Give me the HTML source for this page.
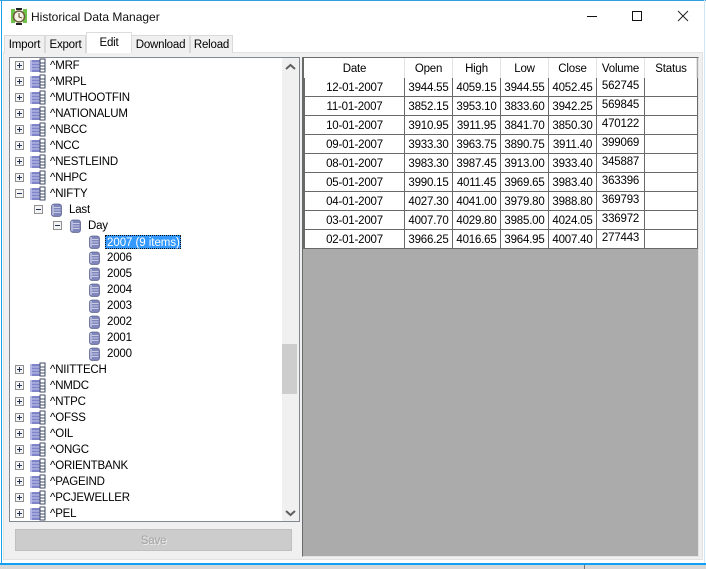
<!DOCTYPE html>
<html><head><meta charset="utf-8"><style>
html,body{margin:0;padding:0}
body{width:706px;height:569px;position:relative;overflow:hidden;background:#fff;font:11.5px "Liberation Sans",sans-serif;letter-spacing:-.2px;color:#000}
div,span,svg{position:absolute;box-sizing:border-box}
.tab{top:35px;height:18px;background:#f0f0f0;border:1px solid #d9d9d9;border-bottom:0;text-align:center;line-height:18px}
.r{left:0;height:16px;line-height:16px;white-space:nowrap;padding-top:1px}
.h,.c{height:19px;line-height:19px;text-align:center;white-space:nowrap;padding-top:2px}
.c[style*="left:597px"]{padding-top:1px}
.vl{top:58px;width:1px;height:191px;background:#696969}
.hl{left:304px;width:393px;height:1px;background:#696969}
.hv{top:58px;width:1px;height:20px;background:#e3e3e3}
</style></head><body>
<svg width="0" height="0" style="left:0;top:0"><defs>
<g id="p"><rect x=".5" y=".5" width="8" height="8" fill="#f4f4f4" stroke="#8f8f8f"/><path d="M2 4.5h5M4.500 2v5" stroke="#22335a"/></g>
<g id="m"><rect x=".5" y=".5" width="8" height="8" fill="#f4f4f4" stroke="#8f8f8f"/><path d="M2 4.500h5" stroke="#22335a"/></g>
<g id="t"><rect x="0" y="2" width="11" height="12" rx="2" fill="#7f84c8"/><path d="M1 5h9M1 8h9M1 11h9" stroke="#c6c9ec"/><rect x="0" y="2" width="2" height="12" fill="#b5b8e6"/><rect x="10" y="1" width="5" height="13" fill="#fff" stroke="#3c4a66"/><path d="M10 5h5M10 8h5M10 11h5" stroke="#3c4a66"/></g>
<g id="d"><rect x=".5" y="1" width="10" height="12.500" rx="2.500" fill="#7f86bb" stroke="#5f6590" stroke-width=".8"/><path d="M2.500 4.500h7M2.500 7h7M2.500 9.500h7" stroke="#c8cbe4"/><rect x="1" y="2" width="2" height="10" fill="#c3c6e6" opacity=".7"/></g>
</defs></svg>

<div style="left:0;top:0;width:706px;height:1px;background:#2f9fe0"></div>
<div style="left:1px;top:0;width:1px;height:565px;background:#19a0f0"></div>
<div style="left:704px;top:0;width:1px;height:565px;background:#cfe6f5"></div>
<div style="left:0;top:563px;width:706px;height:2px;background:#12a0f4"></div>
<div style="left:0;top:565px;width:706px;height:4px;background:#d8d8d8"></div>
<div style="left:584px;top:565px;width:1px;height:4px;background:#777"></div>

<svg style="left:10px;top:8px" width="18" height="17" viewBox="0 0 18 17"><rect x="1" y="1" width="4" height="14" fill="#6fc24a"/><rect x="13" y="1" width="4" height="14" fill="#6fc24a"/><circle cx="9" cy="8.500" r="5.500" fill="#f5f2e6" stroke="#6b5a3a" stroke-width="1.500"/><path d="M9 5v4l3 1" stroke="#5a4a30" fill="none"/><rect x="6" y="0" width="6" height="2" fill="#222"/><rect x="6" y="15" width="6" height="2" fill="#222"/></svg>
<div style="left:31px;top:9px;font-size:12px;letter-spacing:0;line-height:16px;color:#111;white-space:nowrap">Historical Data Manager</div>

<svg style="left:620px;top:5px" width="80" height="22" viewBox="0 0 80 22"><rect x="12.500" y="6.500" width="9" height="9" fill="none" stroke="#111"/><path d="M58 6l10 10M68 6l-10 10" stroke="#222" fill="none"/></svg>
<div style="left:587px;top:16px;width:10px;height:1px;background:#111"></div>

<div style="left:3px;top:52px;width:700px;height:508px;background:#f0f0f0;border:1px solid #e2e2e2"></div>
<div class="tab" style="left:4px;width:41px">Import</div>
<div class="tab" style="left:45px;width:41px">Export</div>
<div class="tab" style="left:131px;width:59px">Download</div>
<div class="tab" style="left:190px;width:43px">Reload</div>
<div class="tab" style="left:86px;top:32px;width:46px;height:21px;background:#fff;line-height:20px;border-color:#dcdcdc">Edit</div>

<div style="left:9px;top:57px;width:291px;height:465px;background:#fff;border:1px solid #828790;overflow:hidden">
<div style="left:272px;top:0;width:17px;height:463px;background:#f0f0f0"></div>
<div style="left:272px;top:286px;width:15px;height:50px;background:#cdcdcd"></div>
<svg style="left:275px;top:5px" width="11" height="8"><path d="M1 6l4.500-4L10 6" fill="none" stroke="#606060" stroke-width="2"/></svg>
<svg style="left:275px;top:451px" width="11" height="8"><path d="M1 2l4.500 4L10 2" fill="none" stroke="#606060" stroke-width="2"/></svg>
</div>

<svg style="left:0;top:0" width="300" height="525">
<use href="#p" x="15" y="61"/><use href="#t" x="30" y="58"/>
<use href="#p" x="15" y="77"/><use href="#t" x="30" y="74"/>
<use href="#p" x="15" y="93"/><use href="#t" x="30" y="90"/>
<use href="#p" x="15" y="109"/><use href="#t" x="30" y="106"/>
<use href="#p" x="15" y="125"/><use href="#t" x="30" y="122"/>
<use href="#p" x="15" y="141"/><use href="#t" x="30" y="138"/>
<use href="#p" x="15" y="157"/><use href="#t" x="30" y="154"/>
<use href="#p" x="15" y="173"/><use href="#t" x="30" y="170"/>
<use href="#m" x="15" y="189"/><use href="#t" x="30" y="186"/>
<use href="#m" x="34" y="205"/><use href="#d" x="51" y="203"/>
<use href="#m" x="53" y="221"/><use href="#d" x="70" y="219"/>
<use href="#d" x="89" y="235"/><use href="#d" x="89" y="251"/><use href="#d" x="89" y="267"/><use href="#d" x="89" y="283"/>
<use href="#d" x="89" y="299"/><use href="#d" x="89" y="315"/><use href="#d" x="89" y="331"/><use href="#d" x="89" y="347"/>
<use href="#p" x="15" y="365"/><use href="#t" x="30" y="362"/>
<use href="#p" x="15" y="381"/><use href="#t" x="30" y="378"/>
<use href="#p" x="15" y="397"/><use href="#t" x="30" y="394"/>
<use href="#p" x="15" y="413"/><use href="#t" x="30" y="410"/>
<use href="#p" x="15" y="429"/><use href="#t" x="30" y="426"/>
<use href="#p" x="15" y="445"/><use href="#t" x="30" y="442"/>
<use href="#p" x="15" y="461"/><use href="#t" x="30" y="458"/>
<use href="#p" x="15" y="477"/><use href="#t" x="30" y="474"/>
<use href="#p" x="15" y="493"/><use href="#t" x="30" y="490"/>
<use href="#p" x="15" y="509"/><use href="#t" x="30" y="506"/>
</svg>

<div class="r" style="left:50px;top:57px">^MRF</div>
<div class="r" style="left:50px;top:73px">^MRPL</div>
<div class="r" style="left:50px;top:89px">^MUTHOOTFIN</div>
<div class="r" style="left:50px;top:105px">^NATIONALUM</div>
<div class="r" style="left:50px;top:121px">^NBCC</div>
<div class="r" style="left:50px;top:137px">^NCC</div>
<div class="r" style="left:50px;top:153px">^NESTLEIND</div>
<div class="r" style="left:50px;top:169px">^NHPC</div>
<div class="r" style="left:50px;top:185px">^NIFTY</div>
<div class="r" style="left:69px;top:201px">Last</div>
<div class="r" style="left:88px;top:217px">Day</div>
<div class="r" style="left:105px;top:235px;width:76px;height:14px;line-height:13px;background:#3399ff;color:#fff;border:1px dotted #111;padding-left:1px;letter-spacing:-.05px">2007 (9 items)</div>
<div class="r" style="left:107px;top:249px">2006</div>
<div class="r" style="left:107px;top:265px">2005</div>
<div class="r" style="left:107px;top:281px">2004</div>
<div class="r" style="left:107px;top:297px">2003</div>
<div class="r" style="left:107px;top:313px">2002</div>
<div class="r" style="left:107px;top:329px">2001</div>
<div class="r" style="left:107px;top:345px">2000</div>
<div class="r" style="left:50px;top:361px">^NIITTECH</div>
<div class="r" style="left:50px;top:377px">^NMDC</div>
<div class="r" style="left:50px;top:393px">^NTPC</div>
<div class="r" style="left:50px;top:409px">^OFSS</div>
<div class="r" style="left:50px;top:425px">^OIL</div>
<div class="r" style="left:50px;top:441px">^ONGC</div>
<div class="r" style="left:50px;top:457px">^ORIENTBANK</div>
<div class="r" style="left:50px;top:473px">^PAGEIND</div>
<div class="r" style="left:50px;top:489px">^PCJEWELLER</div>
<div class="r" style="left:50px;top:505px">^PEL</div>

<div style="left:15px;top:529px;width:277px;height:22px;background:#cccccc;border:1px solid #bfbfbf;text-align:center;line-height:22px;color:#a3a3a3;text-shadow:1px 1px 0 #eee">Save</div>

<div style="left:302px;top:57px;width:397px;height:500px;background:#ababab;border-top:1px solid #6a6a6a;border-left:1px solid #6a6a6a;border-right:1px solid #e3e3e3;border-bottom:1px solid #e3e3e3"></div>
<div style="left:303px;top:58px;width:2px;height:191px;background:#696969"></div>
<div style="left:304px;top:58px;width:393px;height:191px;background:#fff"></div>
<div style="left:303px;top:78px;width:2px;height:171px;background:#696969"></div>
<div class="hv" style="left:404px"></div><div class="hv" style="left:452px"></div><div class="hv" style="left:500px"></div><div class="hv" style="left:548px"></div><div class="hv" style="left:596px"></div><div class="hv" style="left:644px"></div><div class="hv" style="left:696px"></div>
<div class="vl" style="left:404px;top:78px;height:171px"></div><div class="vl" style="left:452px;top:78px;height:171px"></div><div class="vl" style="left:500px;top:78px;height:171px"></div><div class="vl" style="left:548px;top:78px;height:171px"></div><div class="vl" style="left:596px;top:78px;height:171px"></div><div class="vl" style="left:644px;top:78px;height:171px"></div><div class="vl" style="left:697px;top:78px;height:171px"></div>
<div class="hl" style="top:96px"></div><div class="hl" style="top:115px"></div><div class="hl" style="top:134px"></div><div class="hl" style="top:153px"></div><div class="hl" style="top:172px"></div><div class="hl" style="top:191px"></div><div class="hl" style="top:210px"></div><div class="hl" style="top:229px"></div><div class="hl" style="top:248px"></div>

<div class="h" style="left:305px;top:58px;width:99px">Date</div>
<div class="h" style="left:405px;top:58px;width:47px">Open</div>
<div class="h" style="left:453px;top:58px;width:47px">High</div>
<div class="h" style="left:501px;top:58px;width:47px">Low</div>
<div class="h" style="left:549px;top:58px;width:47px">Close</div>
<div class="h" style="left:597px;top:58px;width:47px">Volume</div>
<div class="h" style="left:645px;top:58px;width:52px">Status</div>

<div class="c" style="left:305px;top:77px;width:99px">12-01-2007</div><div class="c" style="left:405px;top:77px;width:47px">3944.55</div><div class="c" style="left:453px;top:77px;width:47px">4059.15</div><div class="c" style="left:501px;top:77px;width:47px">3944.55</div><div class="c" style="left:549px;top:77px;width:47px">4052.45</div><div class="c" style="left:597px;top:76px;width:47px">562745</div>
<div class="c" style="left:305px;top:96px;width:99px">11-01-2007</div><div class="c" style="left:405px;top:96px;width:47px">3852.15</div><div class="c" style="left:453px;top:96px;width:47px">3953.10</div><div class="c" style="left:501px;top:96px;width:47px">3833.60</div><div class="c" style="left:549px;top:96px;width:47px">3942.25</div><div class="c" style="left:597px;top:95px;width:47px">569845</div>
<div class="c" style="left:305px;top:115px;width:99px">10-01-2007</div><div class="c" style="left:405px;top:115px;width:47px">3910.95</div><div class="c" style="left:453px;top:115px;width:47px">3911.95</div><div class="c" style="left:501px;top:115px;width:47px">3841.70</div><div class="c" style="left:549px;top:115px;width:47px">3850.30</div><div class="c" style="left:597px;top:114px;width:47px">470122</div>
<div class="c" style="left:305px;top:134px;width:99px">09-01-2007</div><div class="c" style="left:405px;top:134px;width:47px">3933.30</div><div class="c" style="left:453px;top:134px;width:47px">3963.75</div><div class="c" style="left:501px;top:134px;width:47px">3890.75</div><div class="c" style="left:549px;top:134px;width:47px">3911.40</div><div class="c" style="left:597px;top:133px;width:47px">399069</div>
<div class="c" style="left:305px;top:153px;width:99px">08-01-2007</div><div class="c" style="left:405px;top:153px;width:47px">3983.30</div><div class="c" style="left:453px;top:153px;width:47px">3987.45</div><div class="c" style="left:501px;top:153px;width:47px">3913.00</div><div class="c" style="left:549px;top:153px;width:47px">3933.40</div><div class="c" style="left:597px;top:152px;width:47px">345887</div>
<div class="c" style="left:305px;top:172px;width:99px">05-01-2007</div><div class="c" style="left:405px;top:172px;width:47px">3990.15</div><div class="c" style="left:453px;top:172px;width:47px">4011.45</div><div class="c" style="left:501px;top:172px;width:47px">3969.65</div><div class="c" style="left:549px;top:172px;width:47px">3983.40</div><div class="c" style="left:597px;top:171px;width:47px">363396</div>
<div class="c" style="left:305px;top:191px;width:99px">04-01-2007</div><div class="c" style="left:405px;top:191px;width:47px">4027.30</div><div class="c" style="left:453px;top:191px;width:47px">4041.00</div><div class="c" style="left:501px;top:191px;width:47px">3979.80</div><div class="c" style="left:549px;top:191px;width:47px">3988.80</div><div class="c" style="left:597px;top:190px;width:47px">369793</div>
<div class="c" style="left:305px;top:210px;width:99px">03-01-2007</div><div class="c" style="left:405px;top:210px;width:47px">4007.70</div><div class="c" style="left:453px;top:210px;width:47px">4029.80</div><div class="c" style="left:501px;top:210px;width:47px">3985.00</div><div class="c" style="left:549px;top:210px;width:47px">4024.05</div><div class="c" style="left:597px;top:209px;width:47px">336972</div>
<div class="c" style="left:305px;top:229px;width:99px">02-01-2007</div><div class="c" style="left:405px;top:229px;width:47px">3966.25</div><div class="c" style="left:453px;top:229px;width:47px">4016.65</div><div class="c" style="left:501px;top:229px;width:47px">3964.95</div><div class="c" style="left:549px;top:229px;width:47px">4007.40</div><div class="c" style="left:597px;top:228px;width:47px">277443</div>
</body></html>
